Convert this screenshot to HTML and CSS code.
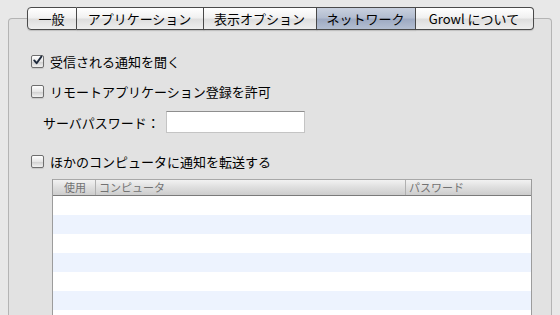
FILE: index.html
```html
<!DOCTYPE html>
<html>
<head>
    <title>Growl ネットワーク</title>
    <link rel="stylesheet" href="styles.css">
</head>
<body>
    <div class="window">
        <div class="tabs">
            <div class="tab tab-general">一般</div>
            <div class="tab tab-apps">アプリケーション</div>
            <div class="tab tab-display">表示オプション</div>
            <div class="tab tab-network selected">ネットワーク</div>
            <div class="tab tab-about">Growl について</div>
        </div>

        <div class="panel">
            <label class="check-row first">
                <span class="checkbox">
                    <svg width="11" height="11" viewBox="0 0 11 11"><path d="M2.2 5.4 L4.6 8.2 L9.4 1.6" fill="none" stroke="#1e2a3c" stroke-width="1.9" stroke-linecap="round" stroke-linejoin="round"/></svg>
                </span>
                受信される通知を聞く
            </label>
            <label class="check-row">
                <span class="checkbox"></span>
                リモートアプリケーション登録を許可
            </label>
            <div class="password-row">
                <span class="password-label">サーバパスワード：</span>
                <input type="password" class="password-input">
            </div>
            <label class="check-row forward">
                <span class="checkbox"></span>
                ほかのコンピュータに通知を転送する
            </label>

            <div class="table">
                <div class="table-head">
                    <div class="col col-use">使用</div>
                    <div class="col col-computer">コンピュータ</div>
                    <div class="col col-password">パスワード</div>
                </div>
                <div class="row"></div>
                <div class="row alt"></div>
                <div class="row"></div>
                <div class="row alt"></div>
                <div class="row"></div>
                <div class="row alt"></div>
                <div class="row"></div>
            </div>
        </div>
    </div>
</body>
</html>
```

FILE: styles.css
```css
body {
    margin: 0;
    height: 315px;
    overflow: hidden;
    background: #e8e8e8;
    font-family: "Noto Sans CJK JP", "Liberation Sans", sans-serif;
    font-size: 13px;
    color: #000;
}
.window {
    padding: 7px 8px 0;
}

/* tab bar sits across the panel's top border */
.tabs {
    display: flex;
    justify-content: center;
    position: relative;
    z-index: 1;
    margin-bottom: -12px;
}
.tab {
    height: 21px;
    line-height: 21px;
    text-align: center;
    border: 1px solid #4a4a4a;
    border-left: none;
    background: linear-gradient(#ffffff, #f1f1f1 45%, #dedede 55%, #eeeeee);
    box-shadow: 0 1px 1px rgba(0, 0, 0, 0.15);
}
.tab-general {
    width: 48px;
    border-left: 1px solid #4a4a4a;
    border-radius: 4px 0 0 4px;
}
.tab-apps { width: 126px; }
.tab-display { width: 112px; }
.tab-network { width: 98px; }
.tab-about {
    width: 117px;
    border-radius: 0 4px 4px 0;
}
.tab.selected {
    background: linear-gradient(#c9d1df, #b3bdd0 45%, #9eaac2 55%, #b4bfd2);
}

.panel {
    height: 300px;
    box-sizing: border-box;
    border: 1px solid #b4b4b4;
    border-bottom: none;
    border-radius: 4px 4px 0 0;
    background: #e2e2e2;
    padding: 32px 22px 0;
}

.check-row {
    display: flex;
    align-items: center;
    height: 20px;
    margin-bottom: 10px;
}
.check-row.forward {
    margin-top: 18px;
    margin-bottom: 8px;
}
.checkbox {
    width: 11px;
    height: 11px;
    margin-right: 6px;
    border: 1px solid #6e6e6e;
    border-radius: 2px;
    background: linear-gradient(#ffffff, #e6e6e6 50%, #d0d0d0 55%, #f2f2f2);
    box-shadow: 0 1px 1px rgba(0, 0, 0, 0.12);
    display: flex;
    align-items: center;
    justify-content: center;
}
.checkbox svg {
    margin-top: -1px;
}

.password-row {
    display: flex;
    align-items: center;
    height: 22px;
    padding-left: 12px;
}
.password-label {
    width: 123px;
}
.password-input {
    width: 139px;
    height: 22px;
    box-sizing: border-box;
    margin: 0;
    border: 1px solid #c4c4c4;
    border-top-color: #8e8e8e;
    background: #fff;
}

.table {
    margin-left: 21px;
    width: 478px;
    border-left: 1px solid #9c9c9c;
    border-right: 1px solid #9c9c9c;
    background: #fff;
}
.table-head {
    display: flex;
    height: 15px;
    border-top: 1px solid #a8a8a8;
    border-bottom: 1px solid #7a7a7a;
    background: linear-gradient(#f2f2f2, #dedede 50%, #cdcdcd);
    font-size: 11px;
    line-height: 15px;
    color: #727272;
}
.col {
    padding-left: 3px;
    border-right: 1px solid #b0b0b0;
}
.col-use {
    width: 43px;
    padding-left: 11px;
    box-sizing: border-box;
}
.col-computer {
    width: 306px;
}
.col-password {
    flex: 1;
    border-right: none;
}
.row {
    height: 19px;
}
.row.alt {
    background: #edf3fe;
}
```
